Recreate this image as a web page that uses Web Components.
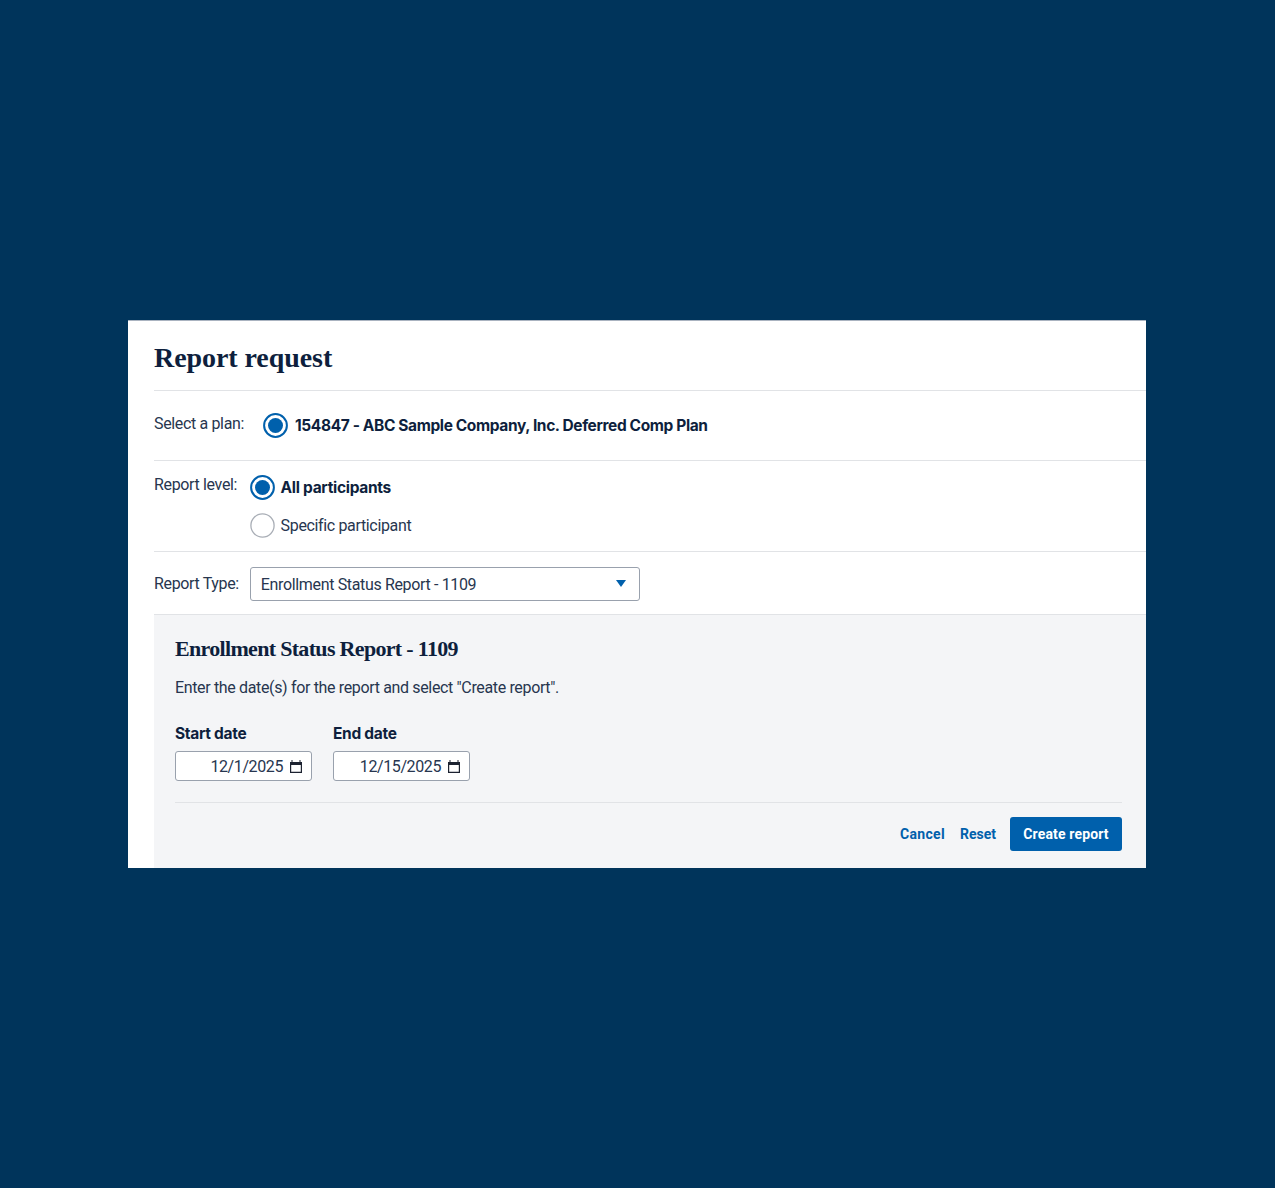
<!DOCTYPE html>
<html>
<head>
<meta charset="utf-8">
<title>Report request</title>
<style>
  html, body { margin: 0; padding: 0; }
  body { background: #00345b; font-family: Roboto, "Liberation Sans", sans-serif; color: #0e1f3d; }
</style>
</head>
<body>
<report-page>
  <report-request>
    <form-row label="Select a plan:" style="--row-h:70px;--label-top:23px;--gap:19px;--pad-top:22px">
      <radio-option checked style="--text-gap:7px;--track:-0.38px">154847 - ABC Sample Company, Inc. Deferred Comp Plan</radio-option>
    </form-row>
    <form-row label="Report level:" style="--row-h:91px;--label-top:14px;--gap:12.5px;--pad-top:14px">
      <radio-option checked>All participants</radio-option>
      <radio-option>Specific participant</radio-option>
    </form-row>
    <form-row label="Report Type:" style="--row-h:63px;--label-top:22px;--gap:11px;--pad-top:15px">
      <select-box>Enrollment Status Report - 1109</select-box>
    </form-row>
    <report-details heading="Enrollment Status Report - 1109">
      <date-field label="Start date" value="12/1/2025"></date-field>
      <date-field label="End date" value="12/15/2025"></date-field>
    </report-details>
  </report-request>
</report-page>

<script>
class ReportPage extends HTMLElement {
  constructor() {
    super();
    this.attachShadow({ mode: 'open' });
    this.shadowRoot.innerHTML = `
      <style>
        :host { display: block; width: 1275px; height: 1188px; padding: 320px 129px 320px 128px; box-sizing: border-box; }
      </style>
      <slot></slot>
    `;
  }
}

class ReportRequest extends HTMLElement {
  constructor() {
    super();
    this.attachShadow({ mode: 'open' });
    this.shadowRoot.innerHTML = `
      <style>
        :host { display: block; height: 548px; background: #fff; border-top: 1px solid #aab3c0; box-sizing: border-box; overflow: hidden; }
        .body { margin-left: 26px; }
        header { height: 70px; border-bottom: 1px solid #e1e3e6; box-sizing: border-box; }
        h1 {
          margin: 0;
          padding-top: 19px;
          font: 700 28px/36px "Liberation Serif", serif;
          letter-spacing: -0.07px;
          color: #0e1f3d;
        }
      </style>
      <div class="body">
        <header><h1>Report request</h1></header>
        <slot></slot>
      </div>
    `;
  }
}

class FormRow extends HTMLElement {
  constructor() {
    super();
    this.attachShadow({ mode: 'open' });
    this.shadowRoot.innerHTML = `
      <style>
        :host { display: flex; height: var(--row-h); border-bottom: 1px solid #e1e3e6; box-sizing: border-box; }
        .label { padding-top: var(--label-top); margin-right: var(--gap); font-size: 16px; letter-spacing: -0.35px; line-height: 20px; color: #27364f; white-space: nowrap; }
        .controls { padding-top: var(--pad-top); display: flex; flex-direction: column; gap: 13px; align-items: flex-start; }
      </style>
      <div class="label"></div>
      <div class="controls"><slot></slot></div>
    `;
  }
  connectedCallback() {
    this.shadowRoot.querySelector('.label').textContent = this.getAttribute('label');
  }
}

class RadioOption extends HTMLElement {
  constructor() {
    super();
    this.attachShadow({ mode: 'open' });
    this.shadowRoot.innerHTML = `
      <style>
        :host { display: flex; align-items: center; gap: var(--text-gap, 6px); height: 25px; font-size: 16px; letter-spacing: -0.35px; color: #27364f; white-space: nowrap; }
        :host([checked]) { font-family: Inter, Roboto, sans-serif; font-size: 15.5px; font-weight: 700; letter-spacing: var(--track, -0.3px); color: #0e1f3d; }
        .dot { width: 25px; height: 25px; flex: none; }
      </style>
      <svg class="dot" viewBox="0 0 25 25"></svg>
      <span><slot></slot></span>
    `;
  }
  connectedCallback() {
    const on = this.hasAttribute('checked');
    this.shadowRoot.querySelector('.dot').innerHTML = on
      ? '<circle cx="12.5" cy="12.5" r="11.4" fill="#fff" stroke="#0060ac" stroke-width="2"/><circle cx="12.5" cy="12.5" r="7.5" fill="#0060ac"/>'
      : '<circle cx="12.5" cy="12.5" r="11.6" fill="#fff" stroke="#a9aeb6" stroke-width="1.3"/>';
  }
}

class SelectBox extends HTMLElement {
  constructor() {
    super();
    this.attachShadow({ mode: 'open' });
    this.shadowRoot.innerHTML = `
      <style>
        :host {
          display: flex; align-items: center; justify-content: space-between;
          width: 390px; height: 34px; box-sizing: border-box;
          padding: 0 13px 0 10px;
          background: #fff; border: 1px solid #99a1ad; border-radius: 3px;
          font-size: 16px; letter-spacing: -0.35px; color: #27364f; white-space: nowrap;
        }
        svg { width: 10px; height: 7px; margin-bottom: 2px; }
      </style>
      <span><slot></slot></span>
      <svg viewBox="0 0 10 7"><path d="M0 0h10L5 7z" fill="#0060ac"/></svg>
    `;
  }
}

class ReportDetails extends HTMLElement {
  constructor() {
    super();
    this.attachShadow({ mode: 'open' });
    this.shadowRoot.innerHTML = `
      <style>
        :host { display: block; height: 253px; padding: 20px 24px 0 21px; box-sizing: border-box; background: #f4f5f7; }
        h2 { margin: 0; font: 700 22px/28px "Liberation Serif", serif; letter-spacing: -0.68px; color: #0e1f3d; }
        p { margin: 14px 0 0; font-size: 16px; letter-spacing: -0.35px; line-height: 22px; color: #27364f; }
        .dates { display: flex; gap: 21px; margin-top: 25px; padding-bottom: 21px; border-bottom: 1px solid #e1e3e6; }
        .actions { display: flex; justify-content: flex-end; align-items: center; gap: 14px; margin-top: 14px; }
        a { font-size: 14px; font-weight: 700; color: #0060ac; text-decoration: none; }
        a.wide { letter-spacing: 0.3px; margin-right: 1px; }
        button {
          width: 112px; height: 34px; border: 0; border-radius: 3px;
          background: #0060ac; color: #fff;
          font: 700 14px Roboto, "Liberation Sans", sans-serif;
          letter-spacing: 0.15px;
        }
      </style>
      <h2></h2>
      <p>Enter the date(s) for the report and select "Create report".</p>
      <div class="dates"><slot></slot></div>
      <div class="actions">
        <a class="wide" href="#">Cancel</a>
        <a href="#">Reset</a>
        <button type="button">Create report</button>
      </div>
    `;
  }
  connectedCallback() {
    this.shadowRoot.querySelector('h2').textContent = this.getAttribute('heading');
  }
}

class DateField extends HTMLElement {
  constructor() {
    super();
    this.attachShadow({ mode: 'open' });
    this.shadowRoot.innerHTML = `
      <style>
        :host { display: block; width: 137px; }
        label { display: block; font: 700 15.5px/20px Inter, Roboto, sans-serif; letter-spacing: -0.3px; color: #0e1f3d; margin-bottom: 7px; }
        .box {
          display: flex; align-items: center; justify-content: flex-end; gap: 7px;
          height: 30px; box-sizing: border-box; padding-right: 9px;
          background: #fff; border: 1px solid #99a1ad; border-radius: 3px;
          font-size: 16px; letter-spacing: -0.4px; color: #27364f;
        }
        svg { width: 12px; height: 13px; flex: none; }
      </style>
      <label></label>
      <div class="box">
        <span class="val"></span>
        <svg viewBox="0 0 12 13"><path d="M2.5 0v2h7V0h1v2H12v11H0V2h1.5V0zM1.2 5v6.8h9.6V5z" fill="#1c2230"/></svg>
      </div>
    `;
  }
  connectedCallback() {
    this.shadowRoot.querySelector('label').textContent = this.getAttribute('label');
    this.shadowRoot.querySelector('.val').textContent = this.getAttribute('value');
  }
}

customElements.define('report-page', ReportPage);
customElements.define('report-request', ReportRequest);
customElements.define('form-row', FormRow);
customElements.define('radio-option', RadioOption);
customElements.define('select-box', SelectBox);
customElements.define('report-details', ReportDetails);
customElements.define('date-field', DateField);
</script>
</body>
</html>
